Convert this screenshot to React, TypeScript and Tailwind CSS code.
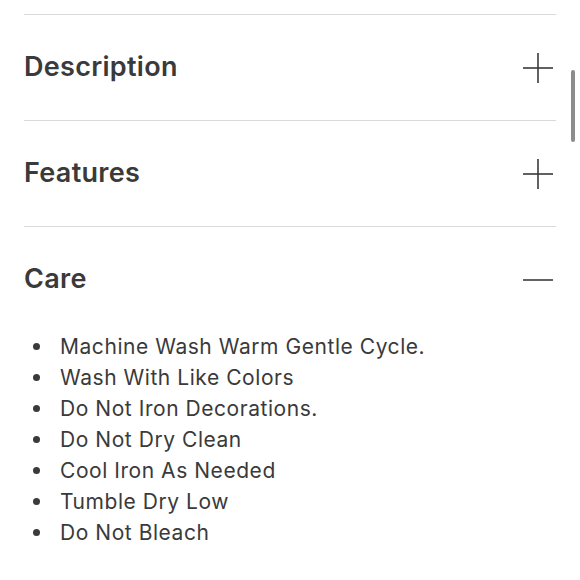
import React, { useState } from 'react'

const care = [
    "Machine Wash Warm Gentle Cycle.",
    "Wash With Like Colors",
    "Do Not Iron Decorations.",
    "Do Not Dry Clean",
    "Cool Iron As Needed",
    "Tumble Dry Low",
    "Do Not Bleach",
]

const Toggle = ({ open }: { open: boolean }) => (
    <svg width="32" height="32" viewBox="0 0 32 32" className="text-[#3a3a3a]">
        <line x1="1" y1="16" x2="31" y2="16" stroke="currentColor" strokeWidth="1.6" />
        {!open && <line x1="16" y1="1" x2="16" y2="31" stroke="currentColor" strokeWidth="1.6" />}
    </svg>
)

const Section = ({ title, open, onToggle, children }: { title: string, open: boolean, onToggle: () => void, children?: React.ReactNode }) => (
    <div className="border-t border-[#d9d9d9]">
        <button onClick={onToggle} className="w-full h-[105px] flex items-center justify-between text-left">
            <span className="text-[27px] font-semibold text-[#3a3a3a] tracking-[0.3px] pb-[1px]">{title}</span>
            <span className="mr-[2px]"><Toggle open={open} /></span>
        </button>
        {open && children}
    </div>
)

export default function App() {
    const [open, setOpen] = useState<string>("Care")
    const flip = (t: string) => setOpen(open === t ? "" : t)

    return (
        <div className="relative w-[580px] h-[580px] bg-white overflow-hidden font-['Inter',sans-serif]">
            <div className="px-6 pt-[14px]">
                <Section title="Description" open={open === "Description"} onToggle={() => flip("Description")}>
                    <p className="pb-6 text-[18px] text-[#3a3a3a]">Product description.</p>
                </Section>
                <Section title="Features" open={open === "Features"} onToggle={() => flip("Features")}>
                    <p className="pb-6 text-[18px] text-[#3a3a3a]">Product features.</p>
                </Section>
                <Section title="Care" open={open === "Care"} onToggle={() => flip("Care")}>
                    <ul className="pl-[6px] -mt-[1px]">
                        {care.map((c) => (
                            <li key={c} className="flex items-center h-[31px] text-[21px] tracking-[0.55px] text-[#3a3a3a]">
                                <span className="w-[7px] h-[7px] rounded-full bg-[#3a3a3a] ml-[3px] mr-[20px]"></span>
                                <span>{c}</span>
                            </li>
                        ))}
                    </ul>
                </Section>
            </div>
            {/* overlay scrollbar */}
            <div className="absolute right-[5px] top-[70px] w-[4px] h-[72px] rounded-full bg-[#8c8c8c]"></div>
        </div>
    )
}
